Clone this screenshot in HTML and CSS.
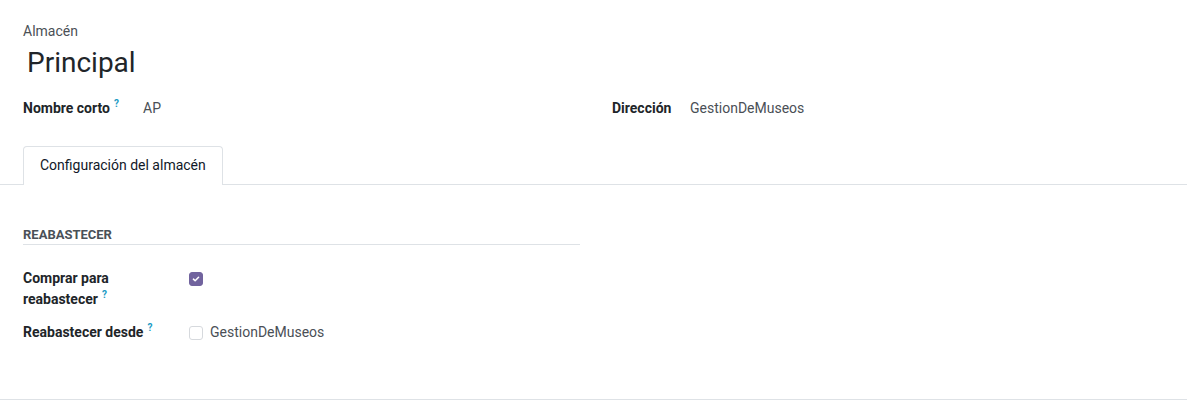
FILE: index.html
```html
<!DOCTYPE html>
<html lang="es">
<head>
<meta charset="utf-8">
<title>Almacén</title>
<link rel="stylesheet" href="styles.css">
</head>
<body>
<div class="sheet">
  <div class="title-block">
    <div class="title-label">Almacén</div>
    <h1 class="title">Principal</h1>
  </div>
  <div class="top-fields">
    <div class="field field-short">
      <span class="label">Nombre corto<sup class="help">?</sup></span>
      <span class="value">AP</span>
    </div>
    <div class="field field-addr">
      <span class="label">Dirección</span>
      <span class="value">GestionDeMuseos</span>
    </div>
  </div>
  <div class="tabs">
    <div class="tab active">Configuración del almacén</div>
  </div>
  <div class="tab-pane">
    <div class="group">
      <div class="separator">Reabastecer</div>
      <div class="row">
        <div class="row-label">Comprar para reabastecer<sup class="help">?</sup></div>
        <div class="row-value"><span class="checkbox checked"><svg viewBox="0 0 14 14" width="14" height="14"><path d="M4 7.2 L6 9.1 L10 5" fill="none" stroke="#fff" stroke-width="1.8" stroke-linecap="round" stroke-linejoin="round"/></svg></span></div>
      </div>
      <div class="row">
        <div class="row-label">Reabastecer desde<sup class="help">?</sup></div>
        <div class="row-value"><span class="checkbox"></span><span class="value">GestionDeMuseos</span></div>
      </div>
    </div>
  </div>
</div>
</body>
</html>
```
FILE: styles.css
```css
html, body {
  margin: 0;
  padding: 0;
  background: #fff;
}
body {
  font-family: Roboto, "Noto Sans", sans-serif;
  font-size: 14px;
  line-height: 21px;
  color: #212529;
}
.sheet {
  height: 399px;
  border-bottom: 1px solid #dee2e6;
  box-sizing: content-box;
}
.title-block {
  padding: 21px 23px 0;
}
.title-label {
  color: #4b5056;
}
.title {
  margin: 4px 0 0 4px;
  font-size: 28px;
  line-height: 34px;
  font-weight: 400;
  color: #212529;
}
.top-fields {
  display: grid;
  grid-template-columns: 589px 1fr;
  padding: 18px 23px 0;
}
.field {
  display: flex;
}
.label {
  font-weight: 700;
  color: #212529;
}
.field-short .label { width: 120px; }
.field-addr .label { width: 78px; }
.value {
  color: #4a4f56;
}
.help {
  display: inline-block;
  color: #1a9ac4;
  font-size: 10px;
  font-weight: 700;
  margin-left: 4px;
  line-height: 10px;
  vertical-align: 6px;
}
.tabs {
  display: flex;
  margin-top: 27px;
  padding-left: 23px;
  border-bottom: 1px solid #dee2e6;
}
.tab {
  padding: 8px 16px 9px;
  border: 1px solid #dee2e6;
  border-bottom: none;
  border-radius: 4px 4px 0 0;
  background: #fff;
  color: #111827;
  margin-bottom: -1px;
}
.tab-pane {
  padding: 41px 23px 0;
}
.group {
  width: 557px;
}
.separator {
  text-transform: uppercase;
  font-weight: 700;
  font-size: 13px;
  line-height: 18px;
  color: #495057;
  border-bottom: 1px solid #dee2e6;
}
.row {
  display: flex;
  align-items: flex-start;
}
.separator + .row { margin-top: 23px; }
.row + .row { margin-top: 12px; }
.row-label {
  width: 160px;
  margin-right: 6px;
  font-weight: 700;
}
.row-value {
  display: flex;
  align-items: flex-start;
}
.checkbox {
  display: inline-flex;
  align-items: center;
  justify-content: center;
  box-sizing: border-box;
  width: 14px;
  height: 14px;
  margin-top: 4px;
  margin-right: 7px;
  border: 1px solid #d6d9dd;
  border-radius: 3px;
  background: #fff;
}
.checkbox.checked {
  background: #71639e;
  border-color: #71639e;
}
.checkbox svg { display: block; }
```
